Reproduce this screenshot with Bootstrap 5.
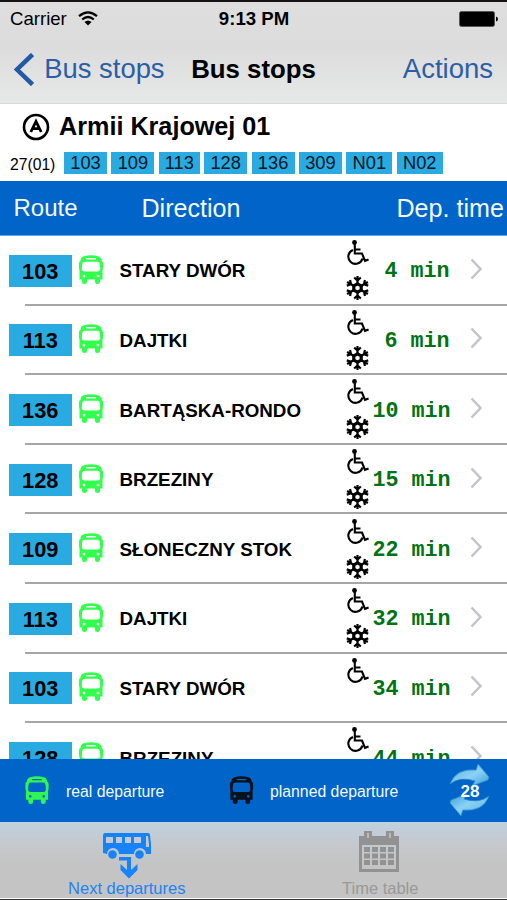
<!DOCTYPE html>
<html lang="en">
<head>
<meta charset="utf-8">
<meta name="viewport" content="width=device-width, initial-scale=1">
<title>Bus stops</title>
<link href="https://cdn.jsdelivr.net/npm/bootstrap@5.3.0/dist/css/bootstrap.min.css" rel="stylesheet">
<style>
  html, body { height: 100%; overflow: hidden; }
  body { font-family: "Liberation Sans", Arial, sans-serif; color: #000; line-height: 1.15; background: #fff; }
  svg { display: block; flex: none; }
  .screen { height: 900px; width: 507px; border-top: 2px solid #151113; border-bottom: 1px solid #333; white-space: nowrap; }
  .top { height: 102px; background: linear-gradient(#dedede, #dcdcdc 45%, #e7e8e8); border-bottom: 1px solid #d8d9d9; }
  .three { display: grid; grid-template-columns: 1fr auto 1fr; align-items: center; }
  .status { height: 33px; padding: 0 9px 0 10px; font-size: 18.6px; }
  .status .carrier { width: 60px; }
  .bar { height: 68px; padding: 0 14px; font-size: 27.4px; }
  .bar a { color: #2b5ea6; text-decoration: none; }
  .bar .action { font-size: 27.5px; }
  .bar h1 { font-size: 25.8px; font-weight: 700; margin: 0; }
  .stop { height: 77px; padding: 8px 0 0 22px; }
  .stop h2 { font-size: 25.2px; font-weight: 700; margin: -1px 0 0 1px; }
  .lines { margin: 11px 0 0 -13px; font-size: 15.7px; }
  .chip { background: #29abe2; font-size: 18.3px; line-height: 22px; height: 22px; text-align: center; color: #04161e; margin-right: 4.4px; }
  .code { width: 55px; padding: 4px 0 0 1px; }
  .blue { background: #0064c8; color: #f4faff; }
  .cols { height: 55px; display: grid; grid-template-columns: 128px 255px 1fr; align-items: center; padding-left: 13.500px; font-size: 25.1px; border-bottom: 1px solid #62a4e8; }
  .cols .first { font-size: 24px; }
  .list { height: 522.5px; overflow: hidden; }
  .dep { height: 69.6px; display: grid; grid-template-columns: 63.5px 47.5px 223px 30px 77px 1fr; align-items: center; padding-left: 8.5px; background: linear-gradient(#a6a6a6, #a6a6a6) 25px 100% / 100% 2px no-repeat; }
  .num { background: #29abe2; height: 32px; line-height: 33px; font-size: 21.8px; font-weight: 700; text-align: center; }
  .real-bus { margin: 0 0 3px 7px; color: #30ff4c; }
  .dir { font-size: 18.8px; font-weight: 700; padding-top: 1px; }
  .time { font: 700 21.7px/1 "Liberation Mono", "Courier New", monospace; color: #007315; text-align: right; padding-top: 3px; }
  .marks { height: 69px; padding-top: 4px; gap: 11px; }
  .legend { height: 63.5px; padding: 0 15px 0 25px; font-size: 15.8px; }
  .real { margin: 3px 0 0 17px; width: 163px; }
  .plan { margin: 3px 0 0 16px; }
  .count { inset: 0; font-size: 17px; line-height: 59px; text-align: center; font-weight: 700; color: #fff; }
  .tabs { height: 76px; background: linear-gradient(#bfd0df, #c5c9cd 30%, #c4c4c4 55%, #c4c4c4); font-size: 16.5px; }
  .tabs a { text-decoration: none; height: 76px; }
  .nexticon { margin: 11px 0 0; }
  .calicon { margin: 9px 2px 7px 0; }
  .on { color: #1c83f2; } .off { color: #999; }
</style>
<script src="https://cdn.jsdelivr.net/npm/bootstrap@5.3.0/dist/js/bootstrap.bundle.min.js"></script>
</head>
<body>
<svg width="0" height="0" class="position-absolute">
  <symbol id="bus" viewBox="0 0 24 29">
    <path fill="currentColor" fill-rule="evenodd" d="M5 1.200Q12-.5 19 1.200Q22.300 2 22.600 6Q24 6.500 24 8V13Q24 14.500 23.500 15V24.500H21V27Q21 29 18.500 29Q16 29 16 27V24.500H8V27Q8 29 5.500 29Q3 29 3 27V24.500H.5V15Q0 14.500 0 13V8Q0 6.500 1.400 6Q1.700 2 5 1.200ZM7 3V4.500H17V3ZM5.500 6.800Q3.500 6.800 3.200 9L2.800 13.500Q2.800 16.500 5.500 16.500H18.500Q21.200 16.500 21.200 13.500L20.800 9Q20.500 6.800 18.500 6.800ZM5 19.700A1.400 1.400 0 1 0 5 22.500A1.400 1.400 0 1 0 5 19.700ZM19 19.700A1.400 1.400 0 1 0 19 22.500A1.400 1.400 0 1 0 19 19.700Z"/>
  </symbol>
  <symbol id="wheel" viewBox="0 0 22 25">
    <circle cx="7.500" cy="2.500" r="2.400"/>
    <path d="M7.800 3V13.500H15L18 20.800L21.600 19.500M8 9.500H13.500M6 9.900A7.200 7.200 0 1 0 15.500 18.500" fill="none" stroke="#000" stroke-width="2.100"/>
  </symbol>
  <symbol id="snow" viewBox="-11.5 -12 23 24">
    <g fill="none" stroke="#000" stroke-width="2.200">
      <g id="arm"><path d="M0-4V-12M-3.300-10.500L0-7.500L3.300-10.500"/></g>
      <use href="#arm" transform="rotate(60)"/><use href="#arm" transform="rotate(120)"/>
      <use href="#arm" transform="rotate(180)"/><use href="#arm" transform="rotate(240)"/><use href="#arm" transform="rotate(300)"/>
      <path d="M0-4.200L3.700-2.100V2.100L0 4.200L-3.700 2.100V-2.100Z" stroke-width="3.200"/>
    </g>
  </symbol>
</svg>

<div class="screen d-flex flex-column">
  <header class="top">
    <div class="status three">
      <div class="d-flex align-items-center gap-2"><span class="carrier">Carrier</span>
        <svg width="20" height="15" viewBox="0 0 20 15"><path d="M1 5.200Q10-2.600 19 5.200M4.200 8.500Q10 3.500 15.800 8.500" fill="none" stroke="#000" stroke-width="2.200"/><path d="M6.500 11Q10 8 13.500 11L10 14.500Z"/></svg>
      </div>
      <strong>9:13 PM</strong>
      <svg class="ms-auto" width="39" height="16" viewBox="0 0 39 16"><rect x=".5" y=".5" width="35" height="15" rx="2" stroke="#555"/><path d="M37 5.500Q39 6 39 8T37 10.500Z"/></svg>
    </div>
    <nav class="bar three">
      <a href="#" class="d-flex align-items-center"><svg width="20" height="33" viewBox="0 0 20 33"><path d="M18.500 1.500L3 16.500L18.500 31.500" fill="none" stroke="#2059a5" stroke-width="4.500"/></svg><span class="ps-2">&#8202;Bus stops</span></a>
      <h1>Bus stops</h1>
      <a href="#" class="action text-end">Actions</a>
    </nav>
  </header>

  <section class="stop">
    <div class="d-flex align-items-center gap-2">
      <svg width="28" height="28" viewBox="0 0 28 28"><circle cx="14" cy="14" r="12" fill="none" stroke="#000" stroke-width="2.600"/><path d="M8.800 19L14 8.500L19.200 19M10.500 15.700H17.500" fill="none" stroke="#000" stroke-width="2.800"/></svg>
      <h2>Armii Krajowej 01</h2>
    </div>
    <div class="lines d-flex" id="lines"><span class="code">27(01)</span></div>
  </section>

  <div class="cols blue"><span class="first">Route</span><span>Direction</span><span>Dep. time</span></div>

  <main class="list" id="list"></main>

  <div class="legend blue d-flex align-items-center">
    <svg width="24" height="28" style="color:#30f651"><use href="#bus"/></svg><span class="real">real departure</span>
    <svg width="25" height="28" style="color:#08111c"><use href="#bus"/></svg><span class="plan">planned departure</span>
    <div class="position-relative ms-auto">
      <svg width="44" height="56" viewBox="0 0 44 56"><defs><linearGradient id="g" x1="0" y1="0" x2="1" y2="1"><stop offset="0" stop-color="#55acdf"/><stop offset=".55" stop-color="#8bd2f4"/><stop offset="1" stop-color="#339ddd"/></linearGradient></defs>
        <path id="turn" d="M2 22Q8 6 28 8L30 2L41 15L40 18L24 24L27 19Q12 14 2 22Z" fill="url(#g)" stroke="#348ac8" stroke-width=".8"/>
        <use href="#turn" transform="rotate(180 21.500 28)"/></svg>
      <span class="count position-absolute">28</span>
    </div>
  </div>

  <nav class="tabs row g-0">
    <a href="#" class="on col-6 d-flex flex-column align-items-center">
      <svg class="nexticon" width="50" height="46" viewBox="0 0 50 46" fill="#1683fb"><path fill-rule="evenodd" d="M3 0H46Q48 0 48 2L49 11V21H44A6 6 0 0 0 32 21H17A6 6 0 0 0 5 21L1 20V3Q1 0 3 0ZM4 4V10H11V4ZM14 4V10H20V4ZM23 4V10H29V4ZM32 4V10H39V4ZM44 3V14H47V11L46 3Z"/><circle cx="10.500" cy="21.500" r="4.300"/><circle cx="37.500" cy="21.500" r="4.300"/><path d="M17 24H29V37L35.500 31V37L27 45.500L18.500 37V31L25 37V27.500H17Z"/></svg>
      <span>Next departures</span>
    </a>
    <a href="#" class="off col-6 d-flex flex-column align-items-center">
      <svg class="calicon" width="40" height="41" viewBox="0 0 40 41"><path fill="#929292" fill-rule="evenodd" d="M0 5H5V0H13V5H27V0H35V5H40V41H0ZM3 14V38H37V14Z"/><path d="M8 2V7H10V2ZM30 2V7H32V2Z" fill="#bbb"/><path d="M5 18.500H35M5 25H35M5 31.500H35" stroke="#929292" stroke-width="5" stroke-dasharray="6 2"/></svg>
      <span>Time table</span>
    </a>
  </nav>
</div>
<script>
  const widths = [43, 43, 41, 43, 43, 43, 46, 46];
  document.getElementById('lines').innerHTML += ['103', '109', '113', '128', '136', '309', 'N01', 'N02']
    .map((n, i) => `<span class="chip" style="width:${widths[i]}px">${n}</span>`).join('');
  const deps = [['103', 'STARY DWÓR', 4, 1], ['113', 'DAJTKI', 6, 1], ['136', 'BARTĄSKA-RONDO', 10, 1], ['128', 'BRZEZINY', 15, 1],
    ['109', 'SŁONECZNY STOK', 22, 1], ['113', 'DAJTKI', 32, 1], ['103', 'STARY DWÓR', 34, 0], ['128', 'BRZEZINY', 44, 0]];
  document.getElementById('list').innerHTML = deps.map(([n, d, t, ac]) => `<div class="dep">
    <span class="num">${n}</span>
    <svg width="24" height="29" class="real-bus"><use href="#bus"/></svg>
    <span class="dir">${d}</span>
    <span class="marks d-flex flex-column align-items-center"><svg width="22" height="25"><use href="#wheel"/></svg>${ac ? '<svg width="23" height="24"><use href="#snow"/></svg>' : ''}</span>
    <span class="time">${t} min</span>
    <svg width="16" height="22" viewBox="0 0 16 22" class="ms-3 mb-1"><path d="M5.500 1.500L14.500 11L5.500 20.500" fill="none" stroke="#c4c4c8" stroke-width="2.500"/></svg>
  </div>`).join('');
</script>
</body>
</html>
